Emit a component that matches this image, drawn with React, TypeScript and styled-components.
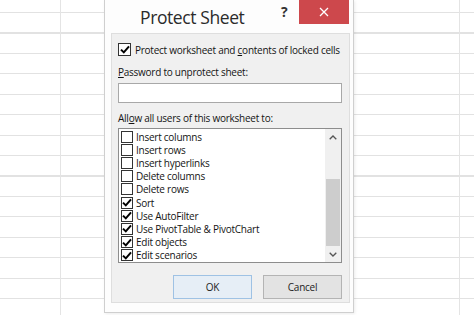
import styled, { createGlobalStyle } from 'styled-components'

const GlobalStyle = createGlobalStyle`
    html, body {
        margin: 0;
        padding: 0;
        background: #fff;
    }
    body {
        font-family: 'Open Sans', 'Noto Sans', sans-serif;
    }
`

const Sheet = styled.div`
    width: 474px;
    height: 315px;
    overflow: hidden;
    padding-left: 104px;
    box-sizing: border-box;
    background-color: #fff;
    background-image:
        linear-gradient(90deg, transparent 60px, #e4e4e4 60px, #e4e4e4 61px, transparent 61px, transparent 459px, #e4e4e4 459px, #e4e4e4 460px, transparent 460px),
        repeating-linear-gradient(180deg, transparent 0, transparent 12px, #e2e2e2 12px, #e2e2e2 13.2px, transparent 13.2px, transparent 20.43px);
`

const Window = styled.div`
    width: 250px;
    height: 313px;
    box-sizing: border-box;
    border: 1px solid #cfcfcf;
    border-top: none;
    background: #fdfdfd;
    display: flex;
    flex-direction: column;
    box-shadow: 1px 1px 3px rgba(0, 0, 0, 0.08);
`

const TitleBar = styled.div`
    height: 33px;
    display: flex;
    align-items: flex-start;
    flex-shrink: 0;
`

const Title = styled.div`
    margin: 5px 0 0 35px;
    font-size: 17.5px;
    color: #2b2b2b;
    letter-spacing: -0.4px;
    flex: 1;
`

const Help = styled.div`
    margin-top: 2px;
    width: 14px;
    font-size: 14px;
    font-weight: 700;
    color: #333;
    margin-right: 4px;
`

const Close = styled.div`
    width: 50px;
    height: 24px;
    background: #cd484c;
    color: #fff;
    display: flex;
    align-items: center;
    justify-content: center;
    margin-right: 4px;
`

const Panel = styled.div`
    flex: 1;
    margin: 0 3px 9px 6px;
    border: 1px solid #dedede;
    background: #f0f0f0;
    padding: 9px 7px 0 6px;
    display: flex;
    flex-direction: column;
    font-size: 10px;
    letter-spacing: -0.25px;
    color: #141414;
`

const CheckRow = styled.label`
    display: flex;
    align-items: center;
    gap: 4px;
    height: 13px;
    white-space: nowrap;
`

const Box = styled.span<{ $size: number }>`
    width: ${p => p.$size}px;
    height: ${p => p.$size}px;
    box-sizing: border-box;
    border: 1px solid #333;
    background: #fff;
    display: flex;
    align-items: center;
    justify-content: center;
    flex-shrink: 0;
`

const Label = styled.div<{ $top: number }>`
    margin-top: ${p => p.$top}px;
    height: 14px;
    line-height: 14px;
    white-space: nowrap;
`

const Key = styled.span`
    text-decoration: underline;
`

const Input = styled.div`
    margin-top: 4px;
    height: 20px;
    box-sizing: border-box;
    border: 1px solid #a8a8a8;
    background: #fff;
`

const List = styled.div`
    margin-top: 3px;
    height: 135px;
    box-sizing: border-box;
    border: 1px solid #8d8d8d;
    background: #fff;
    display: flex;
`

const Items = styled.div`
    flex: 1;
    padding: 1px 0 0 2px;
    overflow: hidden;
`

const Item = styled.div`
    height: 13.2px;
    display: flex;
    align-items: center;
    gap: 3px;
    white-space: nowrap;
`

const ScrollBar = styled.div`
    width: 16px;
    background: #f0f0f0;
    display: flex;
    flex-direction: column;
    align-items: center;
`

const Arrow = styled.div`
    height: 16px;
    display: flex;
    align-items: center;
    justify-content: center;
`

const Thumb = styled.div`
    width: 14px;
    height: 67px;
    margin-top: 34px;
    background: #cdcdcd;
`

const Spacer = styled.div`
    flex: 1;
`

const Buttons = styled.div`
    margin-top: 12px;
    display: flex;
    justify-content: flex-end;
    gap: 11px;
`

const Button = styled.div<{ $primary?: boolean }>`
    width: 79px;
    height: 24px;
    box-sizing: border-box;
    border: 1px solid ${p => (p.$primary ? '#9fc2e4' : '#b4b4b4')};
    background: ${p => (p.$primary ? '#e6eef6' : '#e3e3e3')};
    display: flex;
    align-items: center;
    justify-content: center;
    color: #222;
`

const Check = () => (
    <svg width="10" height="9" viewBox="0 0 10 9">
        <path d="M1 4.6 L3.8 7.4 L9 1.4" fill="none" stroke="#000" strokeWidth="2" />
    </svg>
)

const items: [string, boolean][] = [
    ['Insert columns', false],
    ['Insert rows', false],
    ['Insert hyperlinks', false],
    ['Delete columns', false],
    ['Delete rows', false],
    ['Sort', true],
    ['Use AutoFilter', true],
    ['Use PivotTable & PivotChart', true],
    ['Edit objects', true],
    ['Edit scenarios', true],
]

export default function App() {
    return (
        <>
            <GlobalStyle />
            <Sheet>
                <Window>
                    <TitleBar>
                        <Title>Protect Sheet</Title>
                        <Help>?</Help>
                        <Close>
                            <svg width="10" height="10" viewBox="0 0 10 10">
                                <path d="M1 1 L9 9 M9 1 L1 9" stroke="#fff" strokeWidth="1.3" />
                            </svg>
                        </Close>
                    </TitleBar>
                    <Panel>
                        <CheckRow>
                            <Box $size={13}><Check /></Box>
                            <span>Protect worksheet and <Key>c</Key>ontents of locked cells</span>
                        </CheckRow>
                        <Label $top={9}><Key>P</Key>assword to unprotect sheet:</Label>
                        <Input />
                        <Label $top={8}>All<Key>o</Key>w all users of this worksheet to:</Label>
                        <List>
                            <Items>
                                {items.map(([text, on]) => (
                                    <Item key={text}>
                                        <Box $size={12}>{on && <Check />}</Box>
                                        {text}
                                    </Item>
                                ))}
                            </Items>
                            <ScrollBar>
                                <Arrow>
                                    <svg width="8" height="5" viewBox="0 0 8 5">
                                        <path d="M0.7 4.3 L4 1 L7.3 4.3" fill="none" stroke="#555" strokeWidth="1.3" />
                                    </svg>
                                </Arrow>
                                <Thumb />
                                <Spacer />
                                <Arrow>
                                    <svg width="8" height="5" viewBox="0 0 8 5">
                                        <path d="M0.7 0.7 L4 4 L7.3 0.7" fill="none" stroke="#555" strokeWidth="1.3" />
                                    </svg>
                                </Arrow>
                            </ScrollBar>
                        </List>
                        <Buttons>
                            <Button $primary>OK</Button>
                            <Button>Cancel</Button>
                        </Buttons>
                    </Panel>
                </Window>
            </Sheet>
        </>
    )
}
